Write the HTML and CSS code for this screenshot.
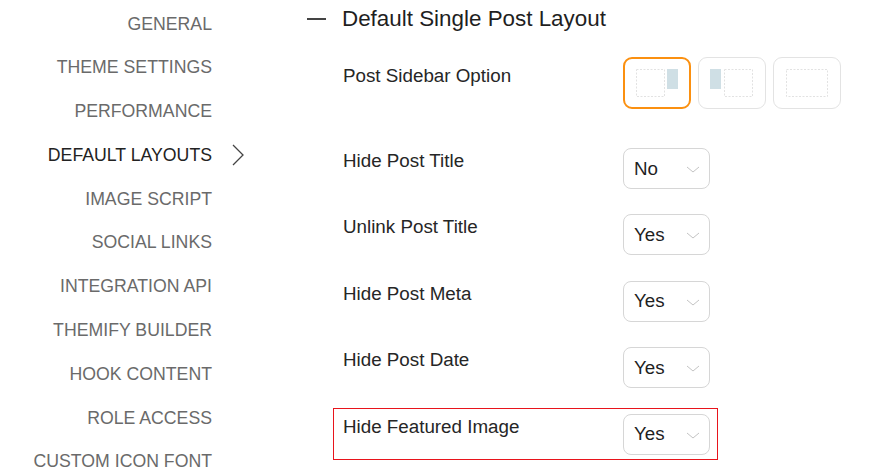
FILE: index.html
```html
<!DOCTYPE html>
<html>
<head>
<meta charset="utf-8">
<link rel="stylesheet" href="styles.css">
</head>
<body>
<div class="page">
  <nav class="sidebar">
    <div class="nav-item">GENERAL</div>
    <div class="nav-item">THEME SETTINGS</div>
    <div class="nav-item">PERFORMANCE</div>
    <div class="nav-item active">DEFAULT LAYOUTS<svg class="nav-arrow" width="12" height="22" viewBox="0 0 12 22"><path d="M1 1 L11 11 L1 21" fill="none" stroke="#444" stroke-width="1.3"/></svg></div>
    <div class="nav-item">IMAGE SCRIPT</div>
    <div class="nav-item">SOCIAL LINKS</div>
    <div class="nav-item">INTEGRATION API</div>
    <div class="nav-item">THEMIFY BUILDER</div>
    <div class="nav-item">HOOK CONTENT</div>
    <div class="nav-item">ROLE ACCESS</div>
    <div class="nav-item">CUSTOM ICON FONT</div>
  </nav>
  <main class="main">
    <div class="section-title"><span class="minus"></span><span>Default Single Post Layout</span></div>
    <div class="row row-layout">
      <div class="label label-layout">Post Sidebar Option</div>
      <div class="layouts">
        <div class="layout-opt selected">
          <svg width="68" height="52" viewBox="0 0 68 52">
            <rect x="13.5" y="12.5" width="28" height="27" fill="none" stroke="#e2e2e2" stroke-dasharray="2 1.5"/>
            <rect x="44" y="12" width="11" height="20" fill="#cfdfe5"/>
          </svg>
        </div>
        <div class="layout-opt">
          <svg width="68" height="52" viewBox="0 0 68 52">
            <rect x="12" y="12" width="11" height="20" fill="#cfdfe5"/>
            <rect x="26.5" y="12.5" width="28" height="27" fill="none" stroke="#e2e2e2" stroke-dasharray="2 1.5"/>
          </svg>
        </div>
        <div class="layout-opt">
          <svg width="68" height="52" viewBox="0 0 68 52">
            <rect x="13.5" y="12.5" width="41" height="27" fill="none" stroke="#e2e2e2" stroke-dasharray="2 1.5"/>
          </svg>
        </div>
      </div>
    </div>
    <div class="row">
      <div class="label">Hide Post Title</div>
      <div class="select"><span>No</span><svg class="caret" width="14" height="7" viewBox="0 0 14 7"><path d="M1 1 L7 6 L13 1" fill="none" stroke="#c4c4c4" stroke-width="1"/></svg></div>
    </div>
    <div class="row">
      <div class="label">Unlink Post Title</div>
      <div class="select"><span>Yes</span><svg class="caret" width="14" height="7" viewBox="0 0 14 7"><path d="M1 1 L7 6 L13 1" fill="none" stroke="#c4c4c4" stroke-width="1"/></svg></div>
    </div>
    <div class="row">
      <div class="label">Hide Post Meta</div>
      <div class="select"><span>Yes</span><svg class="caret" width="14" height="7" viewBox="0 0 14 7"><path d="M1 1 L7 6 L13 1" fill="none" stroke="#c4c4c4" stroke-width="1"/></svg></div>
    </div>
    <div class="row">
      <div class="label">Hide Post Date</div>
      <div class="select"><span>Yes</span><svg class="caret" width="14" height="7" viewBox="0 0 14 7"><path d="M1 1 L7 6 L13 1" fill="none" stroke="#c4c4c4" stroke-width="1"/></svg></div>
    </div>
    <div class="row highlighted">
      <div class="label">Hide Featured Image</div>
      <div class="select"><span>Yes</span><svg class="caret" width="14" height="7" viewBox="0 0 14 7"><path d="M1 1 L7 6 L13 1" fill="none" stroke="#c4c4c4" stroke-width="1"/></svg></div>
    </div>
  </main>
</div>
</body>
</html>
```

FILE: styles.css
```css
html, body {
  margin: 0;
  padding: 0;
  background: #fff;
  font-family: "Liberation Sans", Arial, sans-serif;
  color: #222;
}
.page {
  display: flex;
  width: 876px;
  height: 475px;
  overflow: hidden;
}
.sidebar {
  width: 212px;
  flex: none;
  padding-top: 2.5px;
}
.nav-item {
  position: relative;
  text-align: right;
  font-size: 17.7px;
  line-height: 43.8px;
  height: 43.8px;
  color: #6a6a6a;
  white-space: nowrap;
}
.nav-item.active {
  color: #222;
}
.nav-arrow {
  position: absolute;
  left: 232px;
  top: 10px;
  display: block;
}
.main {
  margin-left: 97px;
  flex: 1;
}
.section-title {
  display: flex;
  align-items: center;
  gap: 16px;
  margin-left: -2px;
  font-size: 22.4px;
  line-height: 26px;
  padding-top: 6px;
  color: #1f1f1f;
}
.minus {
  display: block;
  width: 19px;
  height: 1.5px;
  background: #444;
}
.row {
  display: flex;
  align-items: flex-start;
  margin-left: 24px;
  width: 367px;
  padding: 5px 7px 4px 9px;
  border: 1px solid transparent;
  margin-bottom: 14.4px;
}
.row-layout {
  margin-top: 19px;
  margin-bottom: 28px;
}
.label {
  width: 280px;
  flex: none;
  font-size: 18.8px;
  line-height: 22px;
  padding-top: 2px;
  color: #262626;
}
.label-layout {
  padding-top: 8px;
}
.layouts {
  display: flex;
  gap: 7px;
}
.layout-opt {
  width: 68px;
  height: 52px;
  box-sizing: border-box;
  border: 1px solid #e3e3e3;
  border-radius: 9px;
  position: relative;
}
.layout-opt svg {
  display: block;
  margin: -1px;
}
.layout-opt.selected {
  border: 2px solid #fb9010;
}
.layout-opt.selected svg {
  margin: -2px;
}
.select {
  width: 87px;
  height: 41px;
  box-sizing: border-box;
  border: 1px solid #d6d6d6;
  border-radius: 8px;
  display: flex;
  align-items: center;
  justify-content: space-between;
  padding: 0 9px 0 10px;
  font-size: 18.8px;
  color: #1f1f1f;
}
.caret {
  display: block;
  margin-top: 2px;
}
.row.highlighted {
  border-color: #e8141c;
}
```
